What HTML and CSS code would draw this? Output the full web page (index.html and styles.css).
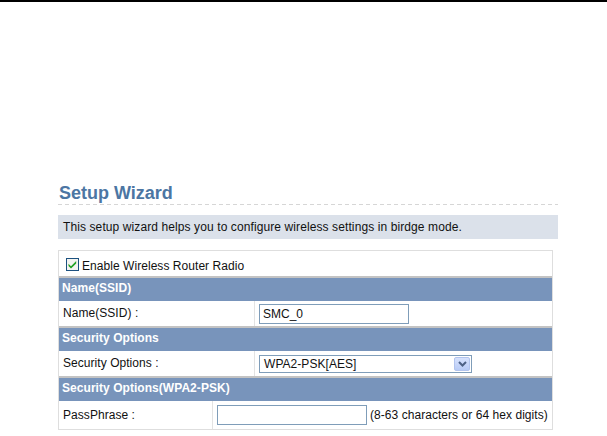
FILE: index.html
```html
<!DOCTYPE html>
<html lang="en">
<head>
    <meta charset="UTF-8">
    <title>Setup Wizard</title>
    <link rel="stylesheet" href="styles.css">
</head>
<body>
    <div class="wizard">
        <h1 class="title">Setup Wizard</h1>
        <p class="intro">This setup wizard helps you to configure wireless settings in birdge mode.</p>

        <div class="panel">
            <div class="row row-check">
                <span class="check">
                    <svg width="13" height="13" viewBox="0 0 13 13">
                        <rect x="0.5" y="0.5" width="12" height="12" fill="#f4f4f0" stroke="#1c5180"/>
                        <path d="M2.5 5.8 L5 8.3 L10.2 3 L10.2 5.4 L5 10.6 L2.5 8.1 Z" fill="#21a121"/>
                    </svg>
                </span>
                <span class="check-text">Enable Wireless Router Radio</span>
            </div>

            <div class="section">Name(SSID)</div>
            <div class="row">
                <div class="label">Name(SSID) :</div>
                <div class="value"><input class="field field-ssid" type="text" value="SMC_0"></div>
            </div>

            <div class="section">Security Options</div>
            <div class="row">
                <div class="label">Security Options :</div>
                <div class="value">
                    <div class="select">
                        <span>WPA2-PSK[AES]</span>
                        <span class="select-btn">
                            <svg width="9" height="6" viewBox="0 0 9 6">
                                <path d="M1 1 L4.5 4.5 L8 1" fill="none" stroke="#4d6185" stroke-width="2"/>
                            </svg>
                        </span>
                    </div>
                </div>
            </div>

            <div class="section">Security Options(WPA2-PSK)</div>
            <div class="row row-pass">
                <div class="label">PassPhrase :</div>
                <div class="value">
                    <input class="field field-pass" type="text" value="">
                    <span class="hint">(8-63 characters or 64 hex digits)</span>
                </div>
            </div>
        </div>
    </div>
</body>
</html>
```

FILE: styles.css
```css
body {
    margin: 0;
    border-top: 2px solid #000;
    background: #fff;
    font-family: "Liberation Sans", Arial, sans-serif;
    font-size: 12px;
    color: #111;
}

.wizard {
    width: 500px;
    margin-left: 58px;
    padding-top: 181px;
}

.title {
    margin: 0;
    padding-left: 1px;
    height: 21px;
    line-height: 21px;
    font-size: 18px;
    font-weight: bold;
    color: #4c76a3;
    padding-bottom: 1px;
    background: repeating-linear-gradient(to right, #d6d6d6 0 4px, transparent 4px 7px) bottom / 100% 1px no-repeat;
}

.intro {
    margin: 10px 0 11px;
    height: 24px;
    line-height: 24px;
    padding-left: 5px;
    background: #dbe1ea;
    letter-spacing: 0.1px;
}

.panel {
    width: 493px;
    border: 1px solid #dedede;
    letter-spacing: 0.05px;
}

.row {
    display: grid;
    grid-template-columns: 196px 1fr;
    height: 25px;
    line-height: 25px;
}

.row-check {
    display: flex;
    align-items: center;
    padding-left: 7px;
    padding-top: 2px;
    height: 23px;
    gap: 3px;
}

.check {
    display: flex;
    width: 13px;
    height: 13px;
}

.check-text {
    margin-top: 4px;
}

.label {
    padding-left: 4px;
    border-right: 1px solid #e3e3e3;
}

.value {
    display: flex;
    align-items: center;
    padding-left: 4px;
}

.section {
    height: 21px;
    line-height: 21px;
    padding: 0 0 2px 3px;
    border-top: 2px solid #c3c3c3;
    background: #7894bb;
    color: #fff;
    font-weight: bold;
}

.field {
    box-sizing: border-box;
    height: 20px;
    margin: 0;
    padding: 0 3px;
    border: 1px solid #7f9db9;
    font-family: "Liberation Sans", Arial, sans-serif;
    font-size: 12px;
    color: #111;
    outline: none;
}

.field-ssid {
    width: 150px;
}

.select {
    box-sizing: border-box;
    display: flex;
    align-items: center;
    justify-content: space-between;
    width: 213px;
    height: 18px;
    padding: 0 1px 0 4px;
    border: 1px solid #7f9db9;
    line-height: 16px;
}

.select-btn {
    display: flex;
    align-items: center;
    justify-content: center;
    width: 16px;
    height: 14px;
    border-radius: 2px;
    background: linear-gradient(#d7e2fd, #b8cbf6);
    border: 1px solid #b2c4ee;
    box-sizing: border-box;
}

.row-pass {
    grid-template-columns: 154px 1fr;
    height: 28px;
    line-height: 28px;
}

.field-pass {
    width: 150px;
}

.hint {
    margin-left: 3px;
}
```
